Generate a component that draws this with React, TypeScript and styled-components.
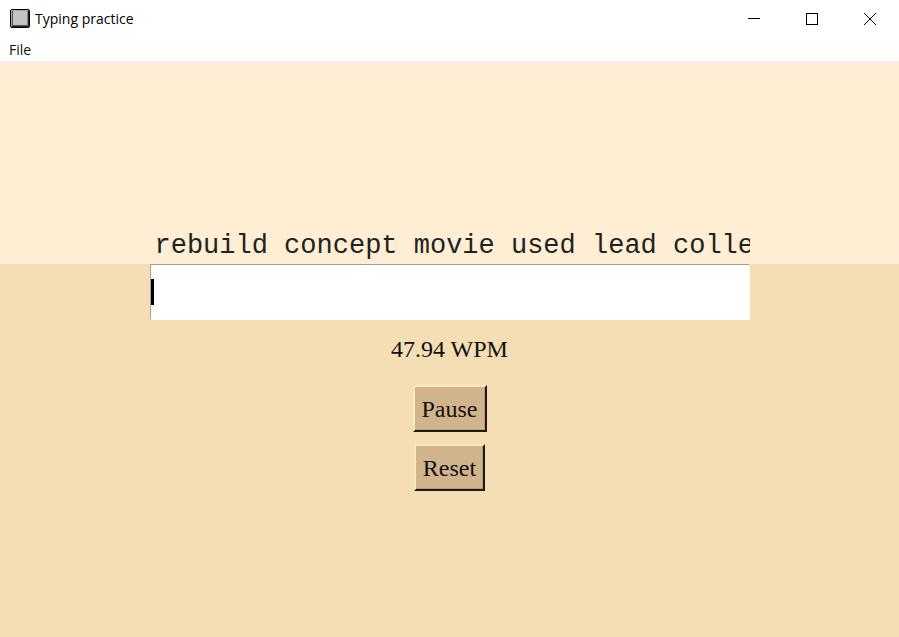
import React from "react";
import styled, { createGlobalStyle } from "styled-components";

const GlobalStyle = createGlobalStyle`
  * { box-sizing: border-box; }
  body { margin: 0; background: #f5deb3; }
`;

const Window = styled.div`
  display: flex;
  flex-direction: column;
  min-height: 100vh;
  color: #000;
  font-family: "Open Sans", "Noto Sans", sans-serif;
`;

const TitleBar = styled.header`
  display: flex;
  align-items: center;
  height: 38px;
  padding-left: 10px;
  background: #fff;
`;

const Title = styled.h1`
  flex: 1;
  margin: 0 0 0 5px;
  font-size: 14px;
  line-height: 20px;
  font-weight: 400;
`;

const WindowButton = styled.button`
  display: flex;
  align-items: center;
  justify-content: center;
  width: 58px;
  height: 38px;
  padding: 0;
  border: 0;
  background: transparent;
`;

const MenuBar = styled.nav`
  display: flex;
  align-items: center;
  height: 25px;
  padding: 0 9px;
  background: #fff;
  border-bottom: 2px solid #f0f0f0;
`;

const MenuButton = styled.button`
  padding: 0;
  border: 0;
  background: transparent;
  color: #111;
  font-family: inherit;
  font-size: 14px;
  line-height: 20px;
`;

const Practice = styled.main`
  flex: 1;
  display: grid;
  grid-template-rows: 201fr 373fr;
  color: #111;
  font-family: "Liberation Serif", "Times New Roman", serif;
`;

const WordsPane = styled.section`
  display: flex;
  flex-direction: column;
  align-items: center;
  justify-content: flex-end;
  background: #ffeed4;
`;

const Words = styled.p`
  width: 600px;
  max-width: 100%;
  margin: 0;
  padding: 0 0 2px 5px;
  overflow: hidden;
  white-space: pre;
  color: #222;
  font-family: "Liberation Mono", "Courier New", monospace;
  font-size: 27px;
  line-height: 32px;
`;

const TypingPane = styled.section`
  display: flex;
  flex-direction: column;
  align-items: center;
  background: #f5deb3;
`;

const EntryField = styled.div`
  position: relative;
  width: 600px;
  max-width: 100%;
`;

const Entry = styled.input`
  display: block;
  width: 100%;
  height: 56px;
  padding: 0 2px;
  border: 1px solid;
  border-color: #a0a0a0 #fff #fff #a0a0a0;
  border-radius: 0;
  outline: 0;
  background: #fff;
  caret-color: transparent;
  font-family: "Liberation Mono", "Courier New", monospace;
  font-size: 27px;
`;

const Caret = styled.span`
  position: absolute;
  top: 15px;
  left: 1px;
  width: 3px;
  height: 26px;
  background: #000;
  pointer-events: none;
`;

const Speed = styled.output`
  margin: 14px 0 21px;
  font-size: 24px;
  line-height: 30px;
`;

const Buttons = styled.div`
  display: flex;
  flex-direction: column;
  align-items: center;
  gap: 12px;
`;

const ActionButton = styled.button`
  height: 47px;
  padding: 0 7px;
  border: solid;
  border-width: 2px;
  border-color: #f8ebb8 #1c1812 #1c1812 #f8ebb8;
  border-radius: 0;
  box-shadow: inset -1px -1px #b79d7a;
  background: #d2b48c;
  color: inherit;
  font-family: inherit;
  font-size: 24px;
  line-height: 30px;
`;

const KeyIcon = () => (
  <svg width="20" height="20" viewBox="0 0 20 20" aria-hidden="true">
    <rect x="0.5" y="0.5" width="19" height="18" rx="1.5" fill="#888" stroke="#000" />
    <path d="M1.5 17V1.5H18" fill="none" stroke="#aaa" />
    <path d="M2 17.5h16.5V2" fill="none" stroke="#222" />
    <rect x="3" y="2" width="14" height="14" rx="1" fill="#c3c3c3" />
    <path d="M2.5 2v14.500H17" fill="none" stroke="#555" />
  </svg>
);

const App = () => (
  <Window>
    <GlobalStyle />
    <TitleBar>
      <KeyIcon />
      <Title>Typing practice</Title>
      <WindowButton aria-label="Minimize">
        <svg width="12" height="12"><path d="M0 5.5h12" stroke="#000" /></svg>
      </WindowButton>
      <WindowButton aria-label="Maximize">
        <svg width="12" height="12"><rect x="0.5" y="0.5" width="11" height="11" fill="none" stroke="#000" /></svg>
      </WindowButton>
      <WindowButton aria-label="Close">
        <svg width="12" height="12"><path d="M0 0l12 12M12 0L0 12" stroke="#000" /></svg>
      </WindowButton>
    </TitleBar>
    <MenuBar>
      <MenuButton>File</MenuButton>
    </MenuBar>
    <Practice>
      <WordsPane>
        <Words id="words">rebuild concept movie used lead colle</Words>
      </WordsPane>
      <TypingPane>
        <EntryField>
          <Entry type="text" aria-labelledby="words" autoComplete="off" spellCheck={false} />
          <Caret />
        </EntryField>
        <Speed>47.94 WPM</Speed>
        <Buttons>
          <ActionButton>Pause</ActionButton>
          <ActionButton>Reset</ActionButton>
        </Buttons>
      </TypingPane>
    </Practice>
  </Window>
);

export default App;
